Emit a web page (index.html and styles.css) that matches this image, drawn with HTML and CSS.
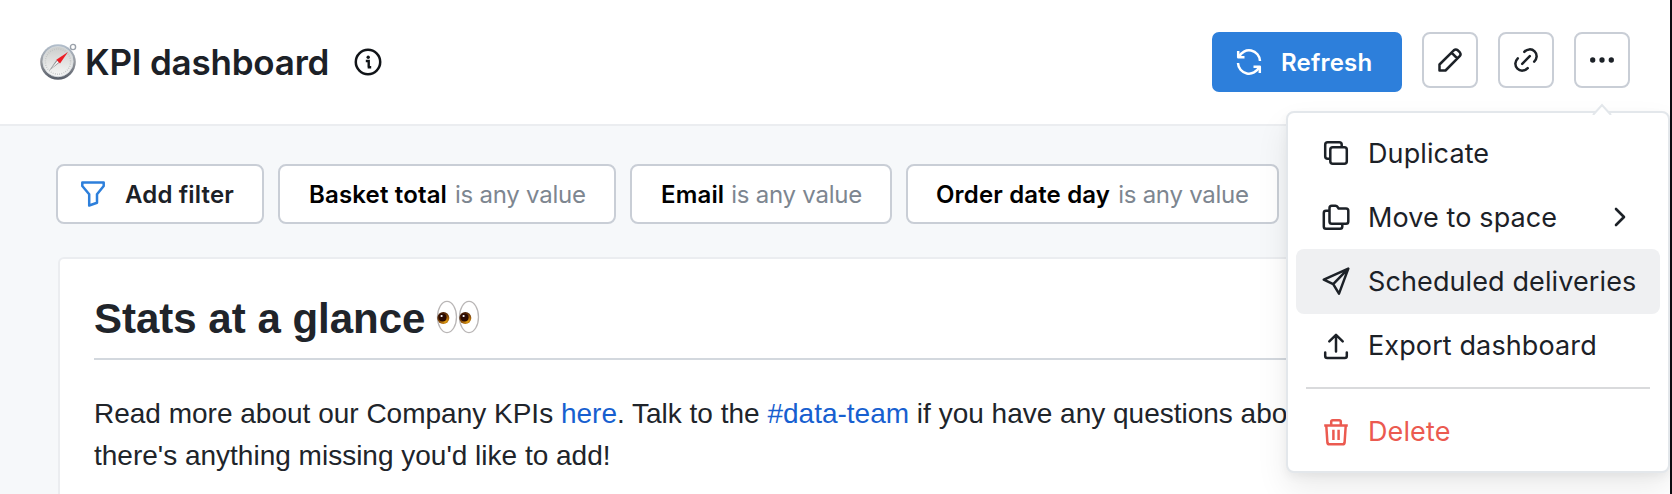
FILE: index.html
```html
<!DOCTYPE html>
<html lang="en">
<head>
<meta charset="utf-8">
<title>KPI dashboard</title>
<link rel="stylesheet" href="styles.css">
</head>
<body>
<div class="app">
  <header class="header">
    <svg class="compass" width="42" height="38" viewBox="0 0 42 38">
      <defs>
        <linearGradient id="rim" x1="0" y1="0" x2="0" y2="1"><stop offset="0" stop-color="#b3c0ce"/><stop offset=".5" stop-color="#96999e"/><stop offset="1" stop-color="#555b67"/></linearGradient>
        <linearGradient id="dial" x1="0" y1="0" x2="0" y2="1"><stop offset="0" stop-color="#cbcdcb"/><stop offset="1" stop-color="#f8f8f8"/></linearGradient>
      </defs>
      <circle cx="33" cy="4" r="2.600" fill="#fff" stroke="#9aa1aa" stroke-width="1.400"/>
      <circle cx="18" cy="19" r="17.800" fill="url(#rim)"/>
      <circle cx="18" cy="18.600" r="15.200" fill="url(#dial)" stroke="#d5dade" stroke-width=".8"/>
      <circle cx="18" cy="18.600" r="12.600" fill="none" stroke="#bfc2c3" stroke-width="1.500" stroke-dasharray=".8 1.400"/>
      <path d="M9 27.800 16.500 17l2.800 2.800z" fill="#8f9294"/>
      <path d="M11 25.800 17.500 17.800l1.300 1.300z" fill="#fff"/>
      <path d="M28 9 16.300 16.700l3.700 3.700z" fill="#ed1c24"/>
    </svg>
    <h1 class="title">KPI dashboard</h1>
    <svg class="info" width="28" height="28" viewBox="0 0 28 28" fill="none" stroke="#111418" stroke-width="2.500">
      <circle cx="14" cy="14" r="12.200"/>
      <path d="M11.800 13H14.700V19.200M13.700 19.200H17.200" stroke-width="2.400"/>
      <circle cx="14.200" cy="9.300" r="1.700" fill="#111418" stroke="none"/>
    </svg>
    <div class="actions">
      <button class="refresh">
        <svg width="26" height="26" viewBox="0 0 26 26" fill="none" stroke="#fff" stroke-width="2.500" stroke-linejoin="round">
          <path d="M3 7.800A11 11 0 0 1 24 12M23 18.200A11 11 0 0 1 2 14"/>
          <path d="M2.200 2V8.200H8.500M23.800 24V17.800H17.500"/>
          <path d="M2 4.500 5.500 8H2zM24 21.500 20.500 18H24z" fill="#fff" stroke-width="1"/>
        </svg>
        <span>Refresh</span>
      </button>
      <button class="square"><svg width="24" height="24" viewBox="0 0 24 24" fill="none" stroke="#1c2127" stroke-width="2.500" stroke-linejoin="round"><path d="M1.500 22.500V16.500L15.800 2.300Q17.800.6 19.800 2.300L21.700 4.200Q23.400 6.200 21.700 8.200L7.500 22.500zM13.500 4.600l5.900 5.900"/></svg></button>
      <button class="square"><svg width="24" height="24" viewBox="0 0 24 24" fill="none" stroke="#1c2127" stroke-width="2.500" stroke-linecap="round"><path d="M8.200 15.800 15.800 8.200M10.300 3.800C13 1 17.500.3 20.600 3.400C23.700 6.500 23 11 20.200 13.700M13.700 20.200C11 23 6.500 23.700 3.400 20.600C.3 17.500 1 13 3.800 10.300"/></svg></button>
      <button class="square"><svg width="26" height="24" viewBox="0 0 26 24" fill="#1c2127"><circle cx="3.700" cy="12" r="2.650"/><circle cx="13" cy="12" r="2.650"/><circle cx="22.300" cy="12" r="2.650"/></svg></button>
    </div>
  </header>

  <main class="body">
    <div class="filters">
      <button class="chip add">
        <svg width="24" height="26" viewBox="0 0 24 26" fill="none" stroke="#2d7fdb" stroke-width="2.500" stroke-linejoin="round"><path d="M1.300 1.500H22.700V5L16 13.300V21.700L8.200 24.500V13.300L1.300 5z"/></svg>
        <b>Add filter</b>
      </button>
      <button class="chip basket"><b>Basket total</b><span>is any value</span></button>
      <button class="chip email"><b>Email</b><span>is any value</span></button>
      <button class="chip order"><b>Order date day</b><span>is any value</span></button>
    </div>
    <section class="card">
      <h2 class="card-title"><span>Stats at a glance</span>
        <svg width="44" height="34" viewBox="0 0 44 34">
          <defs><radialGradient id="iris" cx=".65" cy=".75" r=".7"><stop offset="0" stop-color="#e8a615"/><stop offset=".5" stop-color="#a8650a"/><stop offset="1" stop-color="#4a1f05"/></radialGradient></defs>
          <g fill="#fff" stroke="#b9b6b6" stroke-width="1.300"><ellipse cx="11" cy="17" rx="9.500" ry="15.600"/><ellipse cx="33" cy="17" rx="9.500" ry="15.600"/></g>
          <circle cx="7.300" cy="18" r="6" fill="url(#iris)"/><circle cx="29.300" cy="18" r="6" fill="url(#iris)"/>
          <circle cx="6.600" cy="17.600" r="4" fill="#2b0b02"/><circle cx="28.600" cy="17.600" r="4" fill="#2b0b02"/>
          <circle cx="5.600" cy="16" r="1.100" fill="#fff"/><circle cx="27.600" cy="16" r="1.100" fill="#fff"/>
        </svg>
      </h2>
      <p class="copy">Read more about our Company KPIs <a>here</a>. Talk to the <a>#data-team</a> if you have any questions about<br>there's anything missing you'd like to add!</p>
    </section>
  </main>

  <nav class="menu">
    <svg class="arrow" width="20" height="12" viewBox="0 0 20 12"><path d="M1 12 10 2 19 12" fill="#fff" stroke="#e3e7eb" stroke-width="2"/></svg>
    <div class="item">
      <svg width="28" height="28" viewBox="0 0 28 28" fill="none" stroke="#1c2127" stroke-width="2.500" stroke-linejoin="round"><rect x="8.300" y="8.300" width="16.500" height="16.500" rx="2.500"/><path d="M8 19.700H5.700Q3.200 19.700 3.200 17.200V5.700Q3.200 3.200 5.700 3.200H17.200Q19.700 3.200 19.700 5.700V8"/></svg>
      <span>Duplicate</span>
    </div>
    <div class="item">
      <svg width="28" height="28" viewBox="0 0 28 28" fill="none" stroke="#1c2127" stroke-width="2.500" stroke-linejoin="round"><path d="M7.500 5Q7.500 2.700 9.800 2.700H13.500Q14.800 2.700 15.600 4L16.600 5.500H24Q26.300 5.500 26.300 7.800V18.500Q26.300 20.800 24 20.800H9.800Q7.500 20.800 7.500 18.500zM7 7.800H4Q1.800 7.800 1.800 10V23.500Q1.800 25.800 4 25.800H18Q20.300 25.800 20.300 23.500V21"/></svg>
      <span>Move to space</span>
      <svg class="chevron" width="12" height="20" viewBox="0 0 12 20" fill="none" stroke="#1c2127" stroke-width="2.600" stroke-linecap="round" stroke-linejoin="round"><path d="M2 2l8 8-8 8"/></svg>
    </div>
    <div class="item active">
      <svg width="28" height="28" viewBox="0 0 28 28" fill="none" stroke="#1c2127" stroke-width="2.500" stroke-linejoin="round"><path d="M26.300 1.600 1.800 12.700 11.200 17.200 17 26.600zM26.300 1.600 11.200 17.200"/></svg>
      <span>Scheduled deliveries</span>
    </div>
    <div class="item">
      <svg width="28" height="28" viewBox="0 0 28 28" fill="none" stroke="#1c2127" stroke-width="2.500" stroke-linecap="round" stroke-linejoin="round"><path d="M14 19.500V3M7.300 9.300 14 2.800 20.700 9.300M3.200 20.500V24Q3.200 26 5.200 26H22.800Q24.800 26 24.800 24V20.500"/></svg>
      <span>Export dashboard</span>
    </div>
    <hr class="divider">
    <div class="item danger">
      <svg width="28" height="28" viewBox="0 0 28 28" fill="none" stroke="#eb5a50" stroke-width="2.500" stroke-linejoin="round"><path d="M2.200 7.500H25.800M4.300 8 5.400 24.500Q5.600 26.300 7.400 26.300H20.600Q22.400 26.300 22.600 24.500L23.700 8M9.200 7V3.800Q9.200 2.200 10.800 2.200H17.200Q18.800 2.200 18.800 3.800V7M11.400 11.800V22M16.600 11.800V22"/></svg>
      <span>Delete</span>
    </div>
  </nav>
</div>
</body>
</html>
```

FILE: styles.css
```css
* { box-sizing: border-box; }
body { margin: 0; font-family: Inter, "Liberation Sans", sans-serif; color: #1c2127; background: #f6f8fa; }
h1, h2, p, hr { margin: 0; }
button { font: inherit; color: inherit; padding: 0; margin: 0; }
svg { display: block; flex: none; }
.app { position: relative; width: 1672px; height: 494px; overflow: hidden; border-right: 2px solid #0b0d10; }
.header { display: flex; align-items: flex-start; height: 126px; padding: 32px 40px 0; background: #fff; border-bottom: 2px solid #ebedf0; }
.compass { margin-top: 11px; }
.title { margin: 10px 0 0 3px; width: 270px; font-size: 35px; line-height: 40px; font-weight: 600; letter-spacing: -0.2px; white-space: nowrap; }
.info { margin-top: 16px; margin-left: -1px; }
.actions { display: flex; gap: 20px; margin-left: auto; }
.refresh { display: flex; align-items: center; gap: 19px; width: 190px; height: 60px; padding-left: 24px; border: 0; border-radius: 7px; background: #2d7fdb; color: #fff; font-size: 24px; font-weight: 600; letter-spacing: 0.2px; }
.square { display: flex; align-items: center; justify-content: center; width: 56px; height: 56px; border: 2px solid #c9ced6; border-radius: 8px; background: #fff; }
.body { padding: 38px 0 0 56px; }
.filters { display: flex; gap: 14px; }
.chip { display: flex; align-items: center; height: 60px; border: 2px solid #c9ced6; border-radius: 8px; background: #fff; font-size: 24px; white-space: nowrap; }
.chip b { font-weight: 600; color: #000; letter-spacing: 0.160px; }
.chip span { color: #7d8690; margin-left: 8px; letter-spacing: -0.250px; }
.add { width: 208px; padding-left: 23px; gap: 20px; }
.add b { color: #1c2127; }
.basket { width: 338px; padding-left: 29px; }
.email { width: 262px; padding-left: 29px; }
.email span { margin-left: 7px; }
.order { width: 373px; padding-left: 28px; }
.card { margin: 33px 0 0 2px; width: 1700px; height: 300px; padding: 35px 34px; border: 2px solid #ebedf0; border-radius: 6px; background: #fff; font-family: "Liberation Sans", Arial, sans-serif; color: #20242a; }
.card-title { display: flex; gap: 11px; height: 66px; border-bottom: 2px solid #d3d8de; font-size: 42px; line-height: 50px; font-weight: 700; }
.card-title svg { margin-top: 6px; }
.copy { margin-top: 33px; font-size: 28px; line-height: 42px; white-space: nowrap; }
.copy a { color: #175fd0; }
.menu { position: absolute; left: 1286px; top: 111px; width: 384px; height: 362px; padding: 8px; border: 2px solid #e3e7eb; border-radius: 8px; background: #fff; box-shadow: 0 16px 32px rgba(0,0,0,.08), 0 4px 10px rgba(0,0,0,.05); }
.arrow { position: absolute; left: 304px; top: -10px; }
.item { display: flex; align-items: center; height: 64.250px; padding: 0 30px 0 26px; border-radius: 8px; font-size: 27px; letter-spacing: 0.110px; white-space: nowrap; }
.menu .item:first-of-type { height: 64px; }
.item span { margin-left: 18px; }
.chevron { margin-left: auto; margin-right: 4px; }
.active { background: #eff0f2; }
.divider { height: 2px; margin: 9px 10px 11px; border: 0; background: #d9dadc; }
.danger { color: #eb5a50; }
```
